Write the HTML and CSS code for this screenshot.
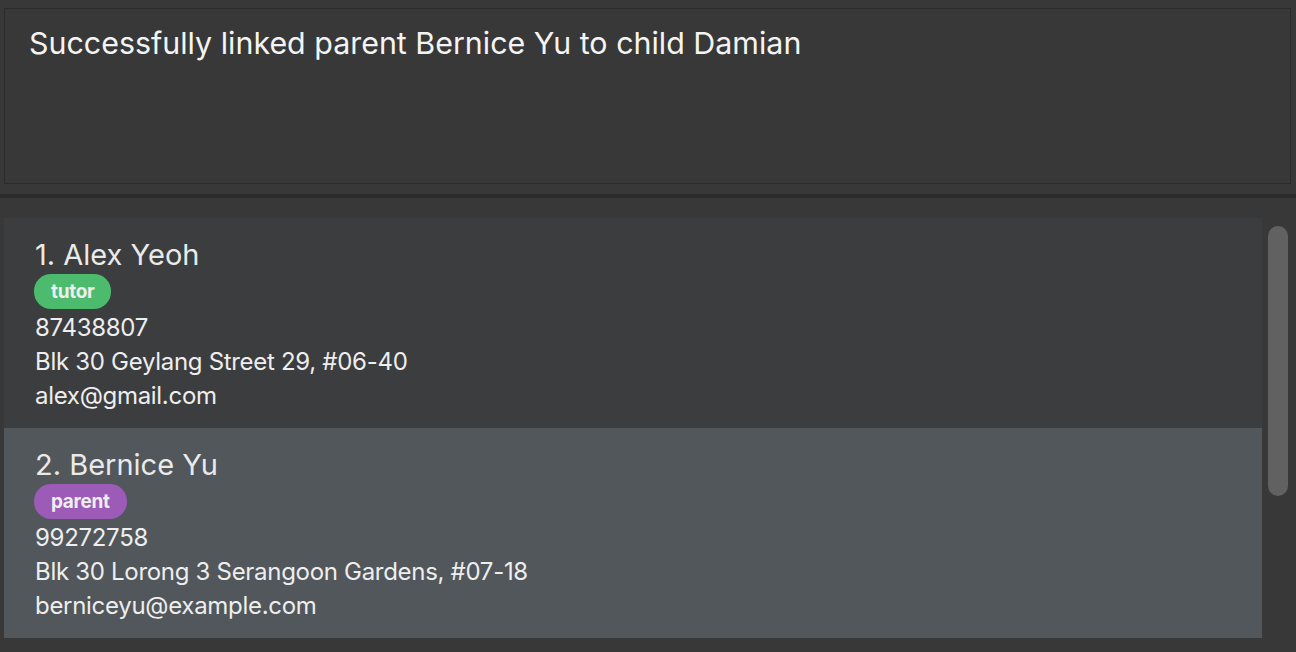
FILE: index.html
```html
<!DOCTYPE html>
<html>
<head>
<meta charset="utf-8">
<link rel="stylesheet" href="styles.css">
</head>
<body>
<div class="result">
  <div class="result-text">Successfully linked parent Bernice Yu to child Damian</div>
</div>
<div class="divider"></div>
<div class="list">
  <div class="cards">
    <div class="card">
      <div class="name">1. Alex Yeoh</div>
      <div class="tags"><span class="tag tutor">tutor</span></div>
      <div class="field">87438807</div>
      <div class="field">Blk 30 Geylang Street 29, #06-40</div>
      <div class="field">alex@gmail.com</div>
    </div>
    <div class="card selected">
      <div class="name">2. Bernice Yu</div>
      <div class="tags"><span class="tag parent">parent</span></div>
      <div class="field">99272758</div>
      <div class="field">Blk 30 Lorong 3 Serangoon Gardens, #07-18</div>
      <div class="field">berniceyu@example.com</div>
    </div>
  </div>
  <div class="scrollbar"></div>
</div>
</body>
</html>
```
FILE: styles.css
```css
html, body {
  margin: 0;
  padding: 0;
  height: 100%;
  overflow: hidden;
}
body {
  background: #383838;
  font-family: Inter, "Noto Sans", sans-serif;
  color: #eeeeee;
}
.result {
  margin: 8px 5px 0 4px;
  height: 174px;
  border: 1px solid #2b2b2b;
  background: #383838;
  box-sizing: content-box;
}
.result-text {
  padding: 16px 0 0 24px;
  font-size: 30.4px;
  line-height: 36px;
  color: #f4f4f4;
}
.divider {
  margin-top: 10px;
  height: 4px;
  background: #2b2b2b;
}
.list {
  display: flex;
  align-items: flex-start;
  padding: 20px 0 0 4px;
}
.cards {
  width: 1258px;
  display: flex;
  flex-direction: column;
}
.card {
  background: #3c3d3f;
  height: 210px;
  box-sizing: border-box;
  padding: 20px 0 0 30px;
}
.card.selected {
  background: #51575a;
}
.name {
  font-size: 29px;
  line-height: 34px;
  color: #eaeaea;
  padding-left: 1px;
}
.tags {
  margin-top: 2px;
  margin-bottom: 2px;
  display: flex;
}
.tag {
  height: 35px;
  line-height: 35px;
  border-radius: 17px;
  padding: 0 17px;
  font-size: 19px;
  font-weight: 700;
  color: #eeeeee;
  letter-spacing: -0.3px;
}
.tag.tutor {
  background: #4cbb6d;
}
.tag.parent {
  background: #9b5bb6;
}
.field {
  font-size: 24px;
  line-height: 34px;
  letter-spacing: -0.3px;
  color: #eeeeee;
  padding-left: 1px;
}
.scrollbar {
  margin: 8px 0 0 6px;
  width: 20px;
  height: 270px;
  border-radius: 10px;
  background: #616161;
}
```
